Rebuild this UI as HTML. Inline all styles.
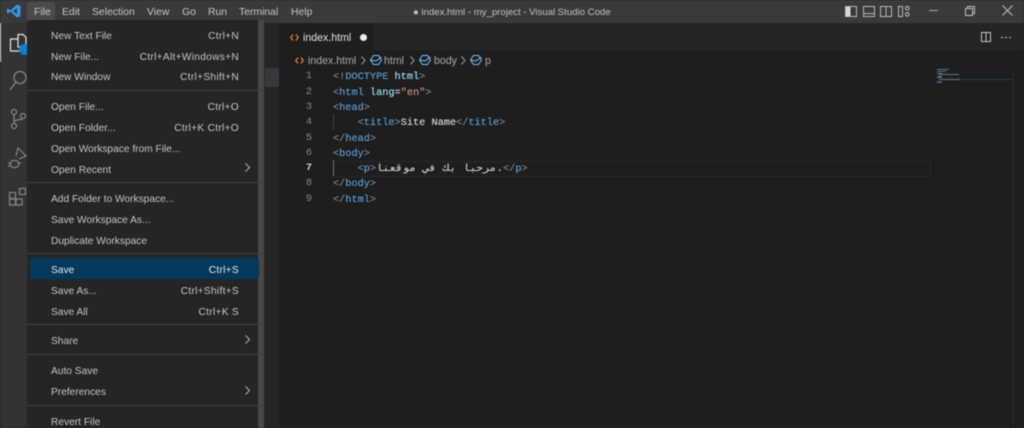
<!DOCTYPE html>
<html><head><meta charset="utf-8"><style>
html,body{margin:0;padding:0;background:#1e1e1e;overflow:hidden}
#r{position:relative;width:1024px;height:428px;overflow:hidden;background:#1e1e1e;font-family:"Liberation Sans",sans-serif;filter:blur(.5px)}
.a{position:absolute}
.t{position:absolute;white-space:nowrap}
.mb{font-size:10.4px;color:#c4c4c4;top:0;line-height:25px}
.m{position:absolute;left:51px;font-size:10.2px;color:#c4c4c4;white-space:nowrap;line-height:24px;height:20px}
.k{position:absolute;right:785px;font-size:10.2px;letter-spacing:.28px;color:#c4c4c4;white-space:nowrap;line-height:24px;height:20px}
.sp{position:absolute;left:27px;width:236px;height:1px;background:#424242}
.ln{position:absolute;width:16px;left:296px;text-align:right;font:10.2px/16px "Liberation Mono",monospace;color:#858585;margin-top:1px}
.c{position:absolute;left:333px;margin-top:1px;font:10.25px/16px "Liberation Mono","DejaVu Sans Mono",monospace;color:#d4d4d4;white-space:pre;text-shadow:0 0 .2px currentColor}
.g{color:#808080}.b{color:#569cd6}.v{color:#9cdcfe}.o{color:#ce9178}
svg{position:absolute;overflow:visible}
</style></head><body><div id="r">
<div class="a" style="left:0;top:0;width:1024px;height:23px;background:#3a3a3a"></div>
<div class="a" style="left:0;top:23px;width:27px;height:405px;background:#333"></div>
<div class="a" style="left:263px;top:23px;width:16px;height:405px;background:#252526"></div>
<div class="a" style="left:279px;top:23px;width:745px;height:27px;background:#252526"></div>
<div class="a" style="left:279px;top:23px;width:95px;height:27px;background:#1e1e1e"></div>
<div class="a" style="left:265px;top:68px;width:14px;height:19px;background:#37373d"></div>

<svg style="left:7px;top:4px" width="14" height="14" viewBox="0 0 14 14"><path d="M10 .5 13.500 2v10L10 13.500 3.500 7.500 1 9.500 0 9V5l1-.5 2.500 2zM10 4 6 7l4 3z" fill="#2f9ae8"/></svg>
<div class="a" style="left:27px;top:2px;width:28px;height:19px;background:#4a4a4a;border-radius:3px"></div>
<div class="t mb" style="left:34px">File</div><div class="t mb" style="left:62px">Edit</div><div class="t mb" style="left:92px">Selection</div><div class="t mb" style="left:147px">View</div><div class="t mb" style="left:182px">Go</div><div class="t mb" style="left:208px">Run</div><div class="t mb" style="left:239px">Terminal</div><div class="t mb" style="left:291px">Help</div>
<div class="t" style="left:413px;top:0;font-size:9.6px;line-height:25px;color:#c0c0c0">● index.html - my_project - Visual Studio Code</div>

<svg style="left:845px;top:6px" width="66" height="12" fill="none" stroke="#b8b8b8" stroke-width="1"><rect x=".5" y=".5" width="11" height="10"/><rect x="1" y="1" width="4.500" height="9" fill="#d8d8d8" stroke="none"/><rect x="18.500" y=".5" width="11" height="10"/><path d="M18.500 7.500h11"/><rect x="35.500" y=".5" width="11" height="10"/><path d="M41 .5v10"/><rect x="53.500" y=".5" width="4" height="10"/><rect x="60.500" y=".5" width="3.500" height="3.500" rx="1.500"/><rect x="60.500" y="6.500" width="3.500" height="3.500" rx="1.500"/></svg>
<div class="a" style="left:929px;top:10px;width:9px;height:1px;background:#a8a8a8"></div>
<svg style="left:965px;top:6px" width="11" height="11" fill="none" stroke="#bdbdbd"><rect x=".5" y="2.500" width="7" height="7"/><path d="M2.500 2.500V.5h7v7H7.500"/></svg>
<svg style="left:1002px;top:5px" width="12" height="12" fill="none" stroke="#c0c0c0"><path d="M.5 .5l10 10M10.500 .5l-10 10"/></svg>

<div class="a" style="left:0;top:23px;width:1px;height:39px;background:#e0e0e0"></div>
<svg style="left:9px;top:33px" width="18" height="20" fill="none" stroke="#e4e4e4" stroke-width="1.200"><path d="M9 1.500h5l3 3V14H9z"/><path d="M9 6H1.500v12H12v-4"/></svg>
<div class="a" style="left:19px;top:44px;width:11px;height:11px;border-radius:50%;background:#0d7fd4"></div>
<svg style="left:9px;top:70px" width="18" height="21" fill="none" stroke="#858585" stroke-width="1.300"><circle cx="11" cy="7.500" r="6"/><path d="M7 12 1 20"/></svg>
<svg style="left:10px;top:109px" width="17" height="21" fill="none" stroke="#858585" stroke-width="1.200"><circle cx="4" cy="3" r="2.500"/><circle cx="4" cy="17" r="2.500"/><circle cx="13" cy="7" r="2.500"/><path d="M4 5.500v9M4 13c0-3 9-2 9-3.500"/></svg>
<svg style="left:8px;top:147px" width="19" height="22" fill="none" stroke="#858585" stroke-width="1.200"><path d="M8 9 10 1l8 8-7 3"/><rect x="2.500" y="13.500" width="8" height="7" rx="3"/><path d="M0 16h2M0 19h2M11 16h2"/></svg>
<svg style="left:8px;top:187px" width="19" height="20" fill="none" stroke="#858585" stroke-width="1.200"><rect x="1.500" y="5.500" width="6" height="6"/><rect x="1.500" y="12" width="6" height="6"/><rect x="8" y="12" width="6" height="6"/><rect x="11.500" y="1.500" width="6" height="6"/></svg>

<div class="a" style="left:27px;top:20px;width:236px;height:408px;background:#252526;border-radius:4px 4px 0 0"></div>
<div class="a" style="left:258px;top:20px;width:6px;height:408px;background:#484848"></div>
<div class="a" style="left:30px;top:258px;width:229px;height:21px;background:#04395e;border-radius:3px"></div>

<div class="m" style="top:25px">New Text File</div><div class="k" style="top:25px">Ctrl+N</div>
<div class="m" style="top:46px">New File...</div><div class="k" style="top:46px">Ctrl+Alt+Windows+N</div>
<div class="m" style="top:66px">New Window</div><div class="k" style="top:66px">Ctrl+Shift+N</div>
<div class="sp" style="top:90px"></div>
<div class="m" style="top:96px">Open File...</div><div class="k" style="top:96px">Ctrl+O</div>
<div class="m" style="top:117px">Open Folder...</div><div class="k" style="top:117px">Ctrl+K Ctrl+O</div>
<div class="m" style="top:138px">Open Workspace from File...</div>
<div class="m" style="top:159px">Open Recent</div>
<div class="sp" style="top:182px"></div>
<div class="m" style="top:188px">Add Folder to Workspace...</div>
<div class="m" style="top:209px">Save Workspace As...</div>
<div class="m" style="top:230px">Duplicate Workspace</div>
<div class="sp" style="top:253px"></div>
<div class="m" style="top:259px;color:#e8e8e8">Save</div><div class="k" style="top:259px;color:#e8e8e8">Ctrl+S</div>
<div class="m" style="top:280px">Save As...</div><div class="k" style="top:280px">Ctrl+Shift+S</div>
<div class="m" style="top:301px">Save All</div><div class="k" style="top:301px">Ctrl+K S</div>
<div class="sp" style="top:324px"></div>
<div class="m" style="top:330px">Share</div>
<div class="sp" style="top:354px"></div>
<div class="m" style="top:360px">Auto Save</div>
<div class="m" style="top:381px">Preferences</div>
<div class="sp" style="top:405px"></div>
<div class="m" style="top:411px">Revert File</div>
<svg style="left:245px;top:163px" width="5" height="10" fill="none" stroke="#b0b0b0"><path d="M.5 .5 4.500 4.500 .5 8.500"/></svg>
<svg style="left:245px;top:335px" width="5" height="10" fill="none" stroke="#b0b0b0"><path d="M.5 .5 4.500 4.500 .5 8.500"/></svg>
<svg style="left:245px;top:386px" width="5" height="10" fill="none" stroke="#b0b0b0"><path d="M.5 .5 4.500 4.500 .5 8.500"/></svg>

<svg style="left:290px;top:34px" width="9" height="7" fill="none" stroke="#e37933" stroke-width="1.300"><path d="M3 .5 .8 3.500 3 6.500M6 .5 8.200 3.500 6 6.500"/></svg>
<div class="t" style="left:303px;top:23px;font-size:10.6px;line-height:30px;color:#e2e2e2">index.html</div>
<div class="a" style="left:360px;top:34px;width:7px;height:7px;border-radius:50%;background:#eee"></div>
<svg style="left:981px;top:32px" width="10" height="10" fill="none" stroke="#c5c5c5"><rect x=".5" y=".5" width="9" height="9"/><path d="M5 .5v9"/></svg>
<div class="a" style="left:1001px;top:37px;width:2px;height:1px;background:#bbb;box-shadow:4px 0 #bbb,8px 0 #bbb"></div>

<svg style="left:295px;top:57px" width="9" height="7" fill="none" stroke="#e37933" stroke-width="1.300"><path d="M3 .5 .8 3.500 3 6.500M6 .5 8.200 3.500 6 6.500"/></svg>
<div class="t" style="left:308px;top:51px;font-size:10.6px;line-height:20px;color:#a9a9a9">index.html</div>
<svg style="left:361px;top:56px" width="5" height="9" fill="none" stroke="#9a9a9a"><path d="M.5 .5 4 4.500.5 8.500"/></svg>
<svg style="left:370px;top:55px" width="12" height="10" fill="none" stroke="#75beff"><path d="M3.500 .5h5l3 4.500-3 4.500h-5L.5 5zM.5 5l5.500 1 5.500-4"/></svg>
<div class="t" style="left:384px;top:51px;font-size:10.6px;line-height:20px;color:#a9a9a9">html</div>
<svg style="left:410px;top:56px" width="5" height="9" fill="none" stroke="#9a9a9a"><path d="M.5 .5 4 4.500.5 8.500"/></svg>
<svg style="left:419px;top:55px" width="12" height="10" fill="none" stroke="#75beff"><path d="M3.500 .5h5l3 4.500-3 4.500h-5L.5 5zM.5 5l5.500 1 5.500-4"/></svg>
<div class="t" style="left:434px;top:51px;font-size:10.6px;line-height:20px;color:#a9a9a9">body</div>
<svg style="left:461px;top:56px" width="5" height="9" fill="none" stroke="#9a9a9a"><path d="M.5 .5 4 4.500.5 8.500"/></svg>
<svg style="left:470px;top:55px" width="12" height="10" fill="none" stroke="#75beff"><path d="M3.500 .5h5l3 4.500-3 4.500h-5L.5 5zM.5 5l5.500 1 5.500-4"/></svg>
<div class="t" style="left:485px;top:51px;font-size:10.6px;line-height:20px;color:#a9a9a9">p</div>

<div class="a" style="left:333px;top:161px;width:597px;height:14px;border:1px solid #282828;border-left:0"></div>
<div class="a" style="left:333px;top:114px;width:1px;height:16px;background:#404040"></div>
<div class="a" style="left:333px;top:160px;width:1px;height:16px;background:#707070"></div>

<div class="ln" style="top:68px">1</div><div class="ln" style="top:84px">2</div><div class="ln" style="top:99px">3</div><div class="ln" style="top:114px">4</div><div class="ln" style="top:130px">5</div><div class="ln" style="top:145px">6</div><div class="ln" style="top:160px;color:#d0d0d0;font-weight:bold">7</div><div class="ln" style="top:175px">8</div><div class="ln" style="top:191px">9</div>

<div class="c" style="top:68px"><span class="g">&lt;!</span><span class="b">DOCTYPE</span> <span class="v">html</span><span class="g">&gt;</span></div>
<div class="c" style="top:84px"><span class="g">&lt;</span><span class="b">html</span> <span class="v">lang</span>=<span class="o">"en"</span><span class="g">&gt;</span></div>
<div class="c" style="top:99px"><span class="g">&lt;</span><span class="b">head</span><span class="g">&gt;</span></div>
<div class="c" style="top:114px">    <span class="g">&lt;</span><span class="b">title</span><span class="g">&gt;</span>Site Name<span class="g">&lt;/</span><span class="b">title</span><span class="g">&gt;</span></div>
<div class="c" style="top:130px"><span class="g">&lt;/</span><span class="b">head</span><span class="g">&gt;</span></div>
<div class="c" style="top:145px"><span class="g">&lt;</span><span class="b">body</span><span class="g">&gt;</span></div>
<div class="c" style="top:160px">    <span class="g">&lt;</span><span class="b">p</span><span class="g">&gt;</span><span style="display:inline-block;width:127px;vertical-align:top;font-family:'DejaVu Sans Mono',monospace;font-size:10.2px;color:#c8c8c8;transform:scaleX(1.09);transform-origin:0 50%">مرحبا بك في موقعنا.</span><span class="g">&lt;/</span><span class="b">p</span><span class="g">&gt;</span></div>
<div class="c" style="top:175px"><span class="g">&lt;/</span><span class="b">body</span><span class="g">&gt;</span></div>
<div class="c" style="top:191px"><span class="g">&lt;/</span><span class="b">html</span><span class="g">&gt;</span></div>

<div class="a" style="left:937px;top:69px;width:12px;height:1px;background:#5a7690"></div>
<div class="a" style="left:937px;top:71px;width:9px;height:1px;background:#6a6a6a"></div>
<div class="a" style="left:937px;top:73px;width:5px;height:1px;background:#4f7597"></div>
<div class="a" style="left:939px;top:74px;width:20px;height:1px;background:#6a7280"></div>
<div class="a" style="left:937px;top:76px;width:5px;height:1px;background:#4f7597"></div>
<div class="a" style="left:937px;top:77px;width:5px;height:1px;background:#4f7597"></div>
<div class="a" style="left:939px;top:79px;width:21px;height:1px;background:#6a7280"></div>
<div class="a" style="left:960px;top:79px;width:53px;height:1px;background:#263b52"></div>
<div class="a" style="left:937px;top:81px;width:5px;height:2px;background:#3e5f7c"></div>
<div class="a" style="left:1013px;top:69px;width:1px;height:359px;background:#2b2b2b"></div>
</div></body></html>
